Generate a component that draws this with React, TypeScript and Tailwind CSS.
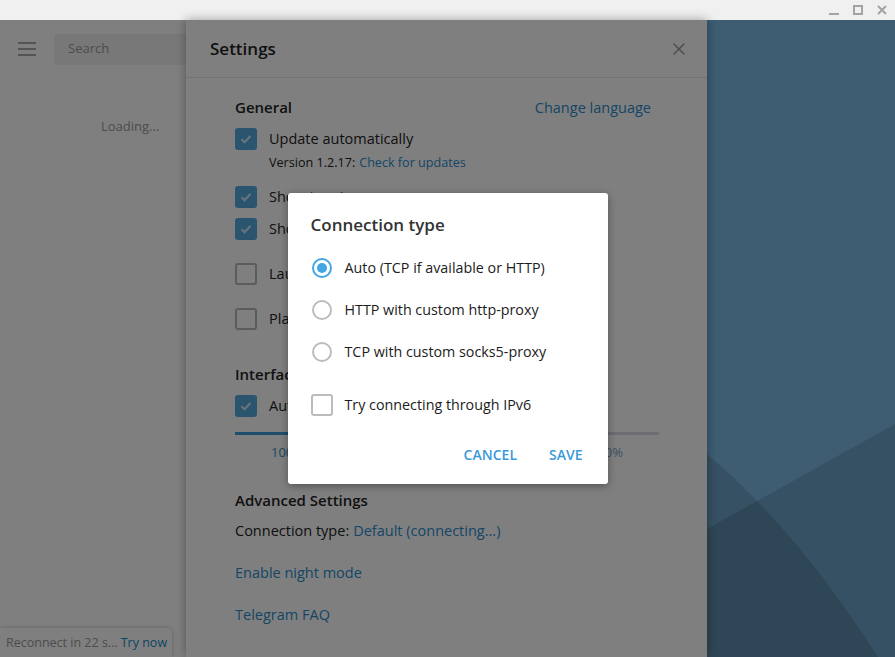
import { X } from 'lucide-react';

const font = { fontFamily: '"Open Sans", "Noto Sans", sans-serif' };

const Check = ({ on, label }: { on: boolean; label: string }) => (
  <div className="flex h-[22px] items-center gap-[12px]">
    {on ? (
      <div className="flex h-[22px] w-[22px] items-center justify-center rounded-[3px] bg-[#56a8dd]">
        <svg width="14" height="14" viewBox="0 0 14 14" fill="none">
          <path d="M2.5 7.2l3 3 6-6.2" stroke="#fff" strokeOpacity="0.75" strokeWidth="2" />
        </svg>
      </div>
    ) : (
      <div className="h-[22px] w-[22px] rounded-[3px] border-2 border-[#b8b8b8]" />
    )}
    <span className="text-[14.5px] text-[#222] whitespace-nowrap">{label}</span>
  </div>
);

const Radio = ({ on, label }: { on: boolean; label: string }) => (
  <div className="flex h-[24px] items-center gap-[13px] pl-[1px]">
    <div
      className={`flex h-[20px] w-[20px] items-center justify-center rounded-full border-2 ${
        on ? 'border-[#40a7e3]' : 'border-[#bcbcbc]'
      }`}
    >
      {on && <div className="h-[10px] w-[10px] rounded-full bg-[#40a7e3]" />}
    </div>
    <span className="text-[14.3px] text-[#1c1c1c]">{label}</span>
  </div>
);

function Sidebar() {
  return (
    <div className="relative w-[186px] shrink-0 bg-white">
      <div className="flex h-[57px] items-center gap-[18px] pl-[18px] pt-[1px]">
        <div className="flex w-[18px] flex-col gap-[4px]">
          <div className="h-[2px] bg-[#a8a8a8]" />
          <div className="h-[2px] bg-[#a8a8a8]" />
          <div className="h-[2px] bg-[#a8a8a8]" />
        </div>
        <div className="flex h-[31px] flex-1 items-center rounded-l-[3px] bg-[#f1f1f1] pl-[14px] text-[13px] text-[#999]">
          Search
        </div>
      </div>
      <div className="mt-[40px] pl-[101px] text-[13px] text-[#999]">Loading...</div>
      <div className="absolute bottom-0 left-0 flex h-[29px] w-[172px] items-center whitespace-nowrap rounded-tr-[4px] bg-white pl-[6px] pt-[1px] text-[12.5px] shadow-[0_0_4px_rgba(0,0,0,0.25)]">
        <span className="text-[#999]">Reconnect in 22 s...</span>
        <span className="ml-[3px] text-[#168acd]">Try now</span>
      </div>
    </div>
  );
}

function SettingsPanel() {
  const blue = 'text-[#2a8ccc]';
  return (
    <div className="relative z-10 w-[521px] shrink-0 bg-white shadow-[0_0_10px_rgba(0,0,0,0.35)]">
      <div className="flex h-[58px] items-center justify-between border-b border-[#e6e6e6] pl-[24px] pr-[18px]">
        <span className="text-[17px] font-semibold text-[#222]">Settings</span>
        <X size={20} strokeWidth={1.8} color="#9a9a9a" />
      </div>
      <div className="pl-[49px] pr-[48px]">
        <div className="mt-[14px] flex h-[30px] items-center justify-between">
          <span className="text-[15px] font-semibold text-[#222]">General</span>
          <span className={`mr-[8px] mt-[2px] text-[14.5px] ${blue}`}>Change language</span>
        </div>
        <div className="mt-[6px]">
          <Check on label="Update automatically" />
        </div>
        <div className="mt-[4px] flex h-[18px] items-center pl-[34px] text-[12.6px] text-[#222]">
          Version 1.2.17:<span className={`ml-[4px] ${blue}`}>Check for updates</span>
        </div>
        <div className="mt-[14px]">
          <Check on label="Show tray icon" />
        </div>
        <div className="mt-[10px]">
          <Check on label="Show taskbar icon" />
        </div>
        <div className="mt-[23px]">
          <Check on={false} label="Launch Telegram when system starts" />
        </div>
        <div className="mt-[23px]">
          <Check on={false} label="Place Telegram in “Send to” menu" />
        </div>
        <div className="mt-[29px] flex h-[30px] items-center">
          <span className="text-[15px] font-semibold text-[#222]">Interface Scale</span>
        </div>
        <div className="mt-[6px]">
          <Check on label="Auto (100%)" />
        </div>
        <div className="mt-[15px] flex h-[3px]">
          <div className="w-[220px] bg-[#3f9ddb]" />
          <div className="flex-1 bg-[#d8dde2]" />
        </div>
        <div className="mt-[9px] flex h-[18px] items-center justify-between pl-[36px] pr-[36px] text-[13px]">
          <span className="text-[#3d8fc8]">100%</span>
          <span className="text-[#7ba3c2]">125%</span>
          <span className="text-[#7ba3c2]">150%</span>
          <span className="text-[#7ba3c2]">200%</span>
        </div>
        <div className="mt-[23px] flex h-[30px] items-center">
          <span className="text-[15px] font-semibold text-[#222]">Advanced Settings</span>
        </div>
        <div className="mt-[6px] flex h-[20px] items-center text-[14.5px] text-[#222]">
          Connection type:<span className={`ml-[4px] ${blue}`}>Default (connecting...)</span>
        </div>
        <div className={`mt-[22px] flex h-[20px] items-center text-[14.5px] ${blue}`}>Enable night mode</div>
        <div className={`mt-[22px] flex h-[20px] items-center text-[14.5px] ${blue}`}>Telegram FAQ</div>
      </div>
    </div>
  );
}

function Wallpaper() {
  return (
    <div className="relative flex-1 overflow-hidden bg-[#7cbbe5]">
      <svg className="absolute inset-0" width="188" height="637" viewBox="0 0 188 637">
        <polygon points="0,509 188,404 188,637 0,637" fill="#000" fillOpacity="0.13" />
        <path d="M0,434 Q90,510 171,637 L0,637 Z" fill="#000" fillOpacity="0.13" />
      </svg>
    </div>
  );
}

export default function App() {
  return (
    <div className="relative h-[657px] w-[895px] overflow-hidden bg-white" style={font}>
      <div className="flex h-[20px] items-center justify-end gap-[14px] bg-[#f0f0f0] pr-[8px]">
        <svg width="10" height="10" viewBox="0 0 10 10">
          <rect x="0" y="8" width="10" height="2" fill="#a3a3a3" />
        </svg>
        <svg width="10" height="10" viewBox="0 0 10 10">
          <rect x="1" y="1" width="8" height="8" fill="none" stroke="#a3a3a3" strokeWidth="2" />
        </svg>
        <svg width="10" height="10" viewBox="0 0 10 10">
          <path d="M1 1l8 8M9 1l-8 8" stroke="#a3a3a3" strokeWidth="2" />
        </svg>
      </div>
      <div className="flex h-[637px]">
        <Sidebar />
        <SettingsPanel />
        <Wallpaper />
      </div>

      <div className="absolute inset-x-0 bottom-0 top-[20px] z-20 flex items-center justify-center bg-black/50">
        <div className="flex h-[291px] w-[320px] flex-col rounded-[3px] bg-white pl-[23px] pr-[25px] pt-[20px] shadow-[0_2px_8px_rgba(0,0,0,0.35)]">
          <div className="flex h-[24px] items-center text-[17px] font-semibold text-[#333]">Connection type</div>
          <div className="mt-[19px]">
            <Radio on label="Auto (TCP if available or HTTP)" />
          </div>
          <div className="mt-[18px]">
            <Radio on={false} label="HTTP with custom http-proxy" />
          </div>
          <div className="mt-[18px]">
            <Radio on={false} label="TCP with custom socks5-proxy" />
          </div>
          <div className="mt-[29px] flex h-[24px] items-center gap-[12px]">
            <div className="h-[22px] w-[22px] rounded-[3px] border-2 border-[#bcbcbc]" />
            <span className="text-[14.3px] text-[#1c1c1c]">Try connecting through IPv6</span>
          </div>
          <div className="mt-[19px] flex h-[36px] items-center justify-end gap-[32px] text-[14px] font-semibold text-[#3a9ad9]">
            <span>CANCEL</span>
            <span>SAVE</span>
          </div>
        </div>
      </div>
    </div>
  );
}
